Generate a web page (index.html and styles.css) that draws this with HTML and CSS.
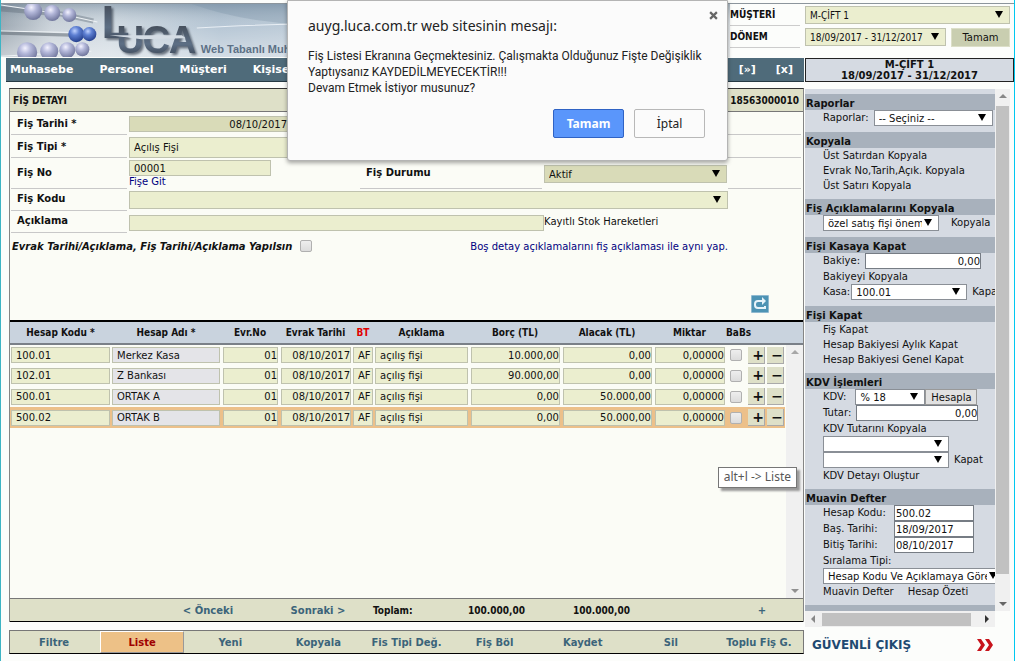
FILE: index.html
```html
<!DOCTYPE html>
<html lang="tr">
<head>
<meta charset="utf-8">
<title>Luca - Fiş Detayı</title>
<link rel="stylesheet" href="styles.css">
</head>
<body>
<header class="top">
  <svg class="banner" viewBox="0 0 726 53" preserveAspectRatio="xMinYMin slice" role="img" aria-label="Luca Web Tabanlı Muhasebe">
    <defs>
      <linearGradient id="sky" x1="0" x2="1" y1="0" y2="0">
        <stop offset="0" stop-color="#8d9aa6"/><stop offset=".07" stop-color="#c3ccd4"/><stop offset=".15" stop-color="#c8d3dc"/><stop offset=".3" stop-color="#a9bccd"/><stop offset="1" stop-color="#dfe4e8"/>
      </linearGradient>
      <linearGradient id="shade" x1="0" x2="0" y1="0" y2="1">
        <stop offset="0" stop-color="#5c7488" stop-opacity=".4"/><stop offset=".4" stop-color="#fff" stop-opacity=".15"/><stop offset="1" stop-color="#fff" stop-opacity=".5"/>
      </linearGradient>
      <linearGradient id="steel" x1="0" x2="0" y1="0" y2="1">
        <stop offset="0" stop-color="#3d434c"/><stop offset=".6" stop-color="#5d6f85"/><stop offset="1" stop-color="#333b48"/>
      </linearGradient>
      <radialGradient id="pearl" cx=".4" cy=".3" r=".7">
        <stop offset="0" stop-color="#f4f3ff"/><stop offset=".4" stop-color="#b4b8da"/><stop offset="1" stop-color="#70769c"/>
      </radialGradient>
      <radialGradient id="blue" cx=".4" cy=".3" r=".7">
        <stop offset="0" stop-color="#bfd2ff"/><stop offset=".4" stop-color="#5d7fd2"/><stop offset="1" stop-color="#26418f"/>
      </radialGradient>
    </defs>
    <rect width="726" height="53" fill="url(#sky)"/>
    <rect width="726" height="53" fill="url(#shade)"/>
    <path d="M190 0L300 0L300 20Q240 18 190 0Z" fill="#7f94a8" opacity=".35"/>
    <path d="M195 24Q240 21 300 20" stroke="#e8eef4" fill="none"/>
    <path d="M0 5L60 10L92 17" stroke="#606c78" stroke-width="5" fill="none" opacity=".4"/>
    <path d="M0 1L60 10L96 18M0 27L96 29M0 52L90 47" stroke="#eef2f5" fill="none"/>
    <path d="M0 29L70 31" stroke="#59636d" stroke-width="3" opacity=".5"/>
    <g fill="url(#pearl)"><circle cx="32" cy="7" r="9"/><circle cx="51" cy="9" r="8"/><circle cx="68" cy="11" r="7"/><circle cx="26" cy="48" r="10"/><circle cx="48" cy="47" r="9"/><circle cx="66" cy="46" r="8"/><circle cx="81" cy="45" r="7"/></g>
    <g fill="url(#blue)"><circle cx="75" cy="30" r="8"/><circle cx="88" cy="30" r="7"/></g>
    <g class="logo" fill="url(#steel)"><text x="100" y="34" font-size="46">L</text><text x="115 141 167" y="49" font-size="38">UCA</text></g>
    <path d="M108 31L180 31L184 34L140 35Z" fill="#d4dce4"/>
    <text class="slogan" x="199" y="49">Web Tabanlı Muhasebe</text>
  </svg>
  <form class="period">
    <label for="musteri">MÜŞTERİ</label>
    <span class="select green wide"><select id="musteri"><option>M-ÇİFT 1</option></select></span>
    <label for="donem">DÖNEM</label>
    <span class="select green"><select id="donem"><option>18/09/2017 - 31/12/2017</option></select></span>
    <button type="button" class="ok">Tamam</button>
  </form>
</header>

<div class="page">
  <main class="left">
    <nav class="menu">
      <a href="#">Muhasebe</a><a href="#">Personel</a><a href="#">Müşteri</a><a href="#">Kişisel</a>
      <a href="#" class="push">[»]</a><a href="#">[x]</a>
    </nav>
    <section class="panel">
      <h1 class="title"><span>FİŞ DETAYI</span><span>18563000010</span></h1>
      <form class="voucher">
        <label class="lbl low" for="tarih">Fiş Tarihi *</label>
        <input id="tarih" class="field dark date" value="08/10/2017">
        <span class="lbl end"></span>

        <label class="lbl low" for="tip">Fiş Tipi *</label>
        <input id="tip" class="field tall span3" value="Açılış Fişi">
        <span class="lbl end"></span>

        <label class="lbl number" for="no">Fiş No</label>
        <div class="no"><input id="no" class="field" value="00001"><a href="#">Fişe Git</a></div>
        <label class="lbl number" for="durum">Fiş Durumu</label>
        <span class="select green dark state"><select id="durum"><option>Aktif</option></select></span>
        <span class="lbl end"></span>

        <label class="lbl first" for="kod">Fiş Kodu</label>
        <span class="select green span3"><select id="kod"><option></option></select></span>

        <label class="lbl first" for="acik">Açıklama</label>
        <input id="acik" class="field span2">
        <a class="stock" href="#">Kayıtlı Stok Hareketleri</a>
      </form>
      <div class="apply">
        <label for="evrak">Evrak Tarihi/Açıklama, Fiş Tarihi/Açıklama Yapılsın</label>
        <input type="checkbox" id="evrak">
        <a href="#">Boş detay açıklamalarını fiş açıklaması ile aynı yap.</a>
      </div>
      <div class="tools">
        <button type="button" aria-label="Yenile"><svg viewBox="0 0 18 18"><rect width="18" height="18" rx="1" fill="#8fb9d0"/><rect x="1" y="1" width="16" height="16" fill="#4d93b4"/><path d="M13 6H7Q4 6 4 9V10Q4 13 7 13H14V11" fill="none" stroke="#e6f3fa" stroke-width="2"/><path d="M11 2L15 6L11 10Z" fill="#e6f3fa"/></svg></button>
      </div>
      <div class="lines">
        <table>
          <colgroup><col class="c-code"><col class="c-name"><col class="c-no"><col class="c-date"><col class="c-bt"><col><col class="c-sum"><col class="c-sum"><col class="c-qty"><col class="c-chk"><col class="c-btn"><col class="c-btn"><col class="c-bar"></colgroup>
          <thead><tr><th>Hesap Kodu *</th><th>Hesap Adı *</th><th>Evr.No</th><th>Evrak Tarihi</th><th class="red">BT</th><th>Açıklama</th><th>Borç (TL)</th><th>Alacak (TL)</th><th>Miktar</th><th class="babs" colspan="2">BaBs</th><th></th><th></th></tr></thead>
          <tbody>
            <tr><td><input aria-label="Hesap Kodu" value="100.01"></td><td><input class="name" aria-label="Hesap Adı" value="Merkez Kasa"></td><td class="num"><input aria-label="Evrak No" value="01"></td><td class="num"><input aria-label="Evrak Tarihi" value="08/10/2017"></td><td><input aria-label="BT" value="AF"></td><td><input aria-label="Açıklama" value="açılış fişi"></td><td class="num"><input aria-label="Borç" value="10.000,00"></td><td class="num"><input aria-label="Alacak" value="0,00"></td><td class="num"><input aria-label="Miktar" value="0,00000"></td><td class="chk"><input type="checkbox" aria-label="BaBs"></td><td><button type="button">+</button></td><td><button type="button">−</button></td><td></td></tr>
            <tr><td><input aria-label="Hesap Kodu" value="102.01"></td><td><input class="name" aria-label="Hesap Adı" value="Z Bankası"></td><td class="num"><input aria-label="Evrak No" value="01"></td><td class="num"><input aria-label="Evrak Tarihi" value="08/10/2017"></td><td><input aria-label="BT" value="AF"></td><td><input aria-label="Açıklama" value="açılış fişi"></td><td class="num"><input aria-label="Borç" value="90.000,00"></td><td class="num"><input aria-label="Alacak" value="0,00"></td><td class="num"><input aria-label="Miktar" value="0,00000"></td><td class="chk"><input type="checkbox" aria-label="BaBs"></td><td><button type="button">+</button></td><td><button type="button">−</button></td><td></td></tr>
            <tr><td><input aria-label="Hesap Kodu" value="500.01"></td><td><input class="name" aria-label="Hesap Adı" value="ORTAK A"></td><td class="num"><input aria-label="Evrak No" value="01"></td><td class="num"><input aria-label="Evrak Tarihi" value="08/10/2017"></td><td><input aria-label="BT" value="AF"></td><td><input aria-label="Açıklama" value="açılış fişi"></td><td class="num"><input aria-label="Borç" value="0,00"></td><td class="num"><input aria-label="Alacak" value="50.000,00"></td><td class="num"><input aria-label="Miktar" value="0,00000"></td><td class="chk"><input type="checkbox" aria-label="BaBs"></td><td><button type="button">+</button></td><td><button type="button">−</button></td><td></td></tr>
            <tr class="active"><td><input aria-label="Hesap Kodu" value="500.02"></td><td><input class="name" aria-label="Hesap Adı" value="ORTAK B"></td><td class="num"><input aria-label="Evrak No" value="01"></td><td class="num"><input aria-label="Evrak Tarihi" value="08/10/2017"></td><td><input aria-label="BT" value="AF"></td><td><input aria-label="Açıklama" value="açılış fişi"></td><td class="num"><input aria-label="Borç" value="0,00"></td><td class="num"><input aria-label="Alacak" value="50.000,00"></td><td class="num"><input aria-label="Miktar" value="0,00000"></td><td class="chk"><input type="checkbox" aria-label="BaBs"></td><td><button type="button">+</button></td><td><button type="button">−</button></td><td></td></tr>
          </tbody>
        </table>
        <div class="vbar idle"><i class="up"></i><i class="down"></i></div>
        <div class="tip">alt+l -&gt; Liste</div>
      </div>
      <div class="totals">
        <button type="button" class="prev">&lt; Önceki</button><button type="button">Sonraki &gt;</button>
        <b>Toplam:</b><b>100.000,00</b><b>100.000,00</b><button type="button" class="add">+</button>
      </div>
    </section>
    <div class="actions">
      <button type="button">Filtre</button><button type="button" class="on">Liste</button><button type="button">Yeni</button><button type="button">Kopyala</button><button type="button">Fis Tipi Değ.</button><button type="button">Fiş Böl</button><button type="button">Kaydet</button><button type="button">Sil</button><button type="button">Toplu Fiş G.</button>
    </div>
  </main>

  <aside class="right">
    <div class="firm">M-ÇİFT 1<br>18/09/2017 - 31/12/2017</div>
    <div class="scroller">
      <div class="side">
        <h2>Raporlar</h2>
        <div class="group"><div class="line"><label for="rap">Raporlar:</label><span class="select w118"><select id="rap"><option>-- Seçiniz --</option></select></span></div></div>
        <h2>Kopyala</h2>
        <div class="group"><a href="#">Üst Satırdan Kopyala</a><a href="#">Evrak No,Tarih,Açık. Kopyala</a><a href="#">Üst Satırı Kopyala</a></div>
        <h2>Fiş Açıklamalarını Kopyala</h2>
        <div class="group"><div class="line wide"><span class="select w116"><select aria-label="Açıklama"><option>özel satış fişi önemli</option></select></span><a href="#">Kopyala</a></div></div>
        <h2>Fişi Kasaya Kapat</h2>
        <div class="group"><div class="line"><label for="bak">Bakiye:</label><input id="bak" class="num w116" value="0,00"></div><a href="#">Bakiyeyi Kopyala</a><div class="line tight"><label for="kasa">Kasa:</label><span class="select w116"><select id="kasa"><option>100.01</option></select></span><a href="#">Kapat</a></div></div>
        <h2>Fişi Kapat</h2>
        <div class="group"><a href="#">Fiş Kapat</a><a href="#">Hesap Bakiyesi Aylık Kapat</a><a href="#">Hesap Bakiyesi Genel Kapat</a></div>
        <h2>KDV İşlemleri</h2>
        <div class="group"><div class="line kdv"><label for="kdv">KDV:</label><span class="select w70"><select id="kdv"><option>% 18</option></select></span><button type="button">Hesapla</button></div><div class="line"><label for="tut">Tutar:</label><input id="tut" class="num w122" value="0,00"></div><a href="#">KDV Tutarını Kopyala</a><div class="line"><span class="select w126"><select aria-label="KDV hesabı"><option></option></select></span></div><div class="line"><span class="select w126"><select aria-label="Karşı hesap"><option></option></select></span><a href="#">Kapat</a></div><a href="#">KDV Detayı Oluştur</a></div>
        <h2>Muavin Defter</h2>
        <div class="group ledger"><div class="line"><label for="hk">Hesap Kodu:</label><input id="hk" class="w80" value="500.02"></div><div class="line"><label for="bt">Baş. Tarihi:</label><input id="bt" class="w80" value="18/09/2017"></div><div class="line"><label for="bi">Bitiş Tarihi:</label><input id="bi" class="w80" value="08/10/2017"></div><label for="sira">Sıralama Tipi:</label><div class="line"><span class="select w176"><select id="sira"><option>Hesap Kodu Ve Açıklamaya Göre</option></select></span></div><div class="pair"><a href="#">Muavin Defter</a><a href="#">Hesap Özeti</a></div></div>
        <div class="rest"></div>
      </div>
      <div class="vbar"><i class="up"></i><b></b><i class="down"></i></div>
      <div class="hbar"><i class="back"></i><b></b><i class="fwd"></i></div>
    </div>
    <a class="exit" href="#">GÜVENLİ ÇIKIŞ <svg viewBox="0 0 16 12"><path d="M0 0H4L8 6L4 12H0L4 6ZM8 0H12L16 6L12 12H8L12 6Z" fill="#c8141c"/></svg></a>
  </aside>
</div>

<div class="overlay">
  <div class="dialog" role="dialog" aria-labelledby="dt">
    <button type="button" class="close" aria-label="Kapat"><svg viewBox="0 0 8 8"><path d="M1 1L7 7M7 1L1 7" stroke="#666" stroke-width="2"/></svg></button>
    <h2 id="dt">auyg.luca.com.tr web sitesinin mesajı:</h2>
    <p>Fiş Listesi Ekranına Geçmektesiniz. Çalışmakta Olduğunuz Fişte Değişiklik<br>Yaptıysanız KAYDEDİLMEYECEKTİR!!!<br>Devam Etmek İstiyor musunuz?</p>
    <div class="choices"><button type="button" class="primary">Tamam</button><button type="button">İptal</button></div>
  </div>
</div>
</body>
</html>
```
FILE: styles.css
```css
* { box-sizing: border-box; }
body { margin: 0; min-height: 100vh; display: flex; flex-direction: column; border-left: 1px solid #3db4c4; border-right: 1px solid #00c8f0; background: #fcfdfb; color: #111; font: 10px/15px Verdana, "DejaVu Sans", sans-serif; position: relative; }
a { color: inherit; text-decoration: none; }
input, select, button { font: inherit; color: inherit; margin: 0; border-radius: 0; }
input:not([type=checkbox]) { width: 100%; min-width: 0; height: 16px; border: 1px solid #bfc2ae; background: #ebeecf; padding: 0 0 0 4px; }
button { border: 0; padding: 0; background: none; }
input[type=checkbox] { appearance: none; width: 12px; height: 12px; border: 1px solid #b0b0b0; border-radius: 2px; background: linear-gradient(#eee, #dcdcdc); }
.select { position: relative; display: block; }
.select::after { content: ""; position: absolute; right: 7px; top: 50%; margin-top: -4px; border: solid transparent; border-width: 7px 4px 0; border-top-color: #000; pointer-events: none; }
.select select { appearance: none; display: block; width: 100%; height: 16px; border: 1px solid #8a8f96; background: #fff; padding: 0 16px 0 4px; }
.green select { height: 18px; border-color: #bfc2ae; background: #ebeecf; }
.dark select, .dark.field { background: #d9dbb8; }

.top { display: flex; margin-top: 3px; border-top: 1px solid #8c959c; height: 53px; }
.banner { flex: 1; min-width: 0; height: 53px; }
.logo { font-family: "Liberation Sans", Arial, sans-serif; font-weight: bold; filter: drop-shadow(2px 2px 1px rgba(30,40,55,.6)); }
.slogan { font: bold 11px "Liberation Sans", Arial, sans-serif; fill: #5d7186; }
.period { display: grid; grid-template-columns: 70px 141px 59px; column-gap: 5px; width: 284px; align-content: start; }
.period label { font-weight: bold; font-family: "DejaVu Sans Condensed", "DejaVu Sans", sans-serif; height: 22px; line-height: 22px; border-bottom: 1px solid #ccc; }
.period .wide { grid-column: 2 / 4; }
.period .select { font-family: "DejaVu Sans Condensed", "DejaVu Sans", sans-serif; padding-top: 2px; }
.period .ok { height: 19px; background: #c9ceb0; border: 1px solid #dcdfc8; margin-top: 2px; }

.page { flex: 1; display: flex; gap: 1px; }
.left { flex: 1; min-width: 0; display: flex; flex-direction: column; padding: 2px 0 8px 5px; }
.menu { display: flex; height: 24px; background: #4f6b7a; border-bottom: 1px solid #263a45; color: #fff; font-weight: bold; font-size: 11px; line-height: 23px; padding: 0 11px 0 4px; gap: 26px; }
.menu .push { margin-left: auto; }
.menu a:last-child { margin-left: -6px; }
.panel { flex: 1; display: flex; flex-direction: column; margin: 6px 0 8px 3px; border: solid #858585; border-width: 0 1px; border-top: 1px solid #333; background: #fbfcf6; }
.title { display: flex; justify-content: space-between; align-items: center; margin: 0; height: 23px; padding: 0 4px 0 3px; background: #dee0c8; border-bottom: 1px solid #777; font: bold 10px "DejaVu Sans Condensed", "DejaVu Sans", sans-serif; }
.voucher { display: grid; grid-template-columns: 118px 231px 184px 184px 1fr; padding: 0 2px 0 1px; align-items: start; }
.lbl { min-height: 22px; line-height: 20px; padding-left: 6px; margin-right: 2px; border-bottom: 1px solid #c8c8c8; font-weight: bold; align-self: stretch; }
.lbl.end { grid-column: 5; min-height: 23px; margin: 0; }
.lbl.low { line-height: 24px; height: 23px; }
.lbl.first { grid-column: 1; }
.lbl.number { line-height: 30px; }
.voucher > .field { margin-top: 4px; }
.voucher .tall { height: 21px; margin-top: 1px; }
.voucher .date { padding: 0 72px 0 0; text-align: right; }
.voucher .span3 { grid-column: 2 / 5; margin-top: 2px; }
.voucher .span2 { grid-column: 2 / 4; }
.voucher .stock { grid-column: 4 / 6; line-height: 22px; }
.no { padding: 2px 0 0; }
.no input:not([type=checkbox]) { width: 142px; display: block; }
.no a { display: block; line-height: 12px; color: #000080; }
.state { margin: 7px 1px 0 0; }
.apply { display: flex; align-items: center; height: 26px; padding: 0 75px 0 2px; }
.apply label { font-weight: bold; font-style: italic; }
.apply input { margin-left: 8px; }
.apply a { margin-left: auto; color: #000080; }
.tools { height: 61px; display: flex; justify-content: flex-end; align-items: flex-end; padding: 0 34px 7px 0; }
.tools button, .tools svg { display: block; width: 18px; height: 18px; }
.lines { flex: 1; position: relative; border-top: 2px solid #000; }
table { width: 100%; table-layout: fixed; border-collapse: collapse; }
.c-code { width: 101px; } .c-name { width: 110px; } .c-no { width: 58px; } .c-date { width: 73px; } .c-bt { width: 22px; } .c-sum { width: 92px; } .c-qty { width: 73px; } .c-chk { width: 21px; } .c-btn { width: 19px; } .c-bar { width: 18px; }
th { height: 22px; padding: 0; background: #c9d3de; border-bottom: 2px solid #7a8088; font: bold 10px "DejaVu Sans Condensed", "DejaVu Sans", sans-serif; white-space: nowrap; }
th.red { color: #e00000; }
th.babs { text-align: left; }
td { height: 21px; padding: 1px; }
td input, td button { display: block; }
td.num input:not([type=checkbox]) { text-align: right; padding: 0; }
td input:not([type=checkbox]).name { background: #e4e4e8; }
td.num { padding-left: 2px; }
td.chk input { margin: auto; }
td button { width: 100%; height: 17px; background: #dee0c8; border: solid #aaa; border-width: 0 1px 1px 0; font-weight: bold; font-size: 14px; line-height: 14px; text-align: right; }
.active td:not(:last-child) { background: #ecc08a; }
.vbar { background: #f0f0f0; display: flex; flex-direction: column; align-items: center; justify-content: space-between; padding: 5px 0; }
.vbar.idle { position: absolute; top: 23px; bottom: 0; right: 0; width: 17px; }
.up, .down, .back, .fwd { border: 4px solid transparent; }
.up { border-top: 0; border-bottom-color: #888; }
.down { border-bottom: 0; border-top-color: #666; }
.idle i { opacity: .7; }
.back { border-left: 0; border-right-color: #888; }
.fwd { border-right: 0; border-left-color: #333; }
.tip { position: absolute; right: 6px; top: 145px; height: 21px; padding: 0 5px; border: 1px solid #767676; background: #fff; box-shadow: 3px 3px 2px #999; color: #575757; font: 12px/18px "Noto Sans", sans-serif; white-space: nowrap; }
.totals { display: grid; grid-template-columns: 110px 110px 95px 105px 1fr 82px; padding-left: 143px; height: 24px; align-items: center; background: #dee0c8; border-top: 1px solid #777; border-bottom: 1px solid #000; }
.totals b { font-family: "DejaVu Sans Condensed", "DejaVu Sans", sans-serif; }
.totals button, .actions button { font-weight: bold; color: #3b647a; }
.actions { display: grid; grid-template-columns: repeat(9, 1fr); margin-left: 3px; height: 24px; background: #dee0c8; border: 1px solid #777; border-bottom-color: #000; }
.actions .on { background: #edc187; color: #a00000; border: solid; border-width: 1px; border-color: #fff #999 #999 #fff; margin: 0 2px; }

.right { width: 209px; display: flex; flex-direction: column; padding-top: 2px; }
.firm { height: 24px; border: 1px solid #222; background: #d5dae2; text-align: center; font-weight: bold; line-height: 11px; }
.scroller { margin: 7px 4px 0 0; display: grid; grid-template-columns: minmax(0, 1fr) 15px; grid-template-rows: 522px 16px; }
.side { overflow: hidden; background: #d5dae2; padding-top: 5px; }
.side h2 { margin: 0; height: 16px; padding-left: 1px; background: #a8b1bc; font: bold 10px/20px "DejaVu Sans", sans-serif; white-space: nowrap; }
.group { padding: 0 0 6px 18px; white-space: nowrap; }
.group > a, .group > label { display: block; }
.line { display: flex; gap: 5px; height: 16px; }
.line label, .line a { flex: none; }
.line.wide { gap: 12px; }
.line.tight { gap: 1px; }
.line.tight a { margin-left: 4px; }
.side input:not([type=checkbox]) { background: #fff; border-color: #767c84; padding-left: 1px; }
.side .num { text-align: right; }
.kdv { gap: 9px; }
.kdv button { width: 52px; margin-left: -9px; background: #e1e1e1; border: 1px solid #999; }
.side .w70, .side .w80, .side .w116, .side .w118, .side .w122, .side .w126, .side .w176 { flex: none; }
.side .w70 { width: 70px; }
.side input.w80:not([type=checkbox]) { width: 80px; }
.side .w116, .side input.w116:not([type=checkbox]) { width: 116px; }
.side .w118 { width: 119px; }
.side input.w122:not([type=checkbox]) { width: 122px; }
.side .w126 { width: 126px; }
.side .w176 { width: 176px; }
.side .w176::after { right: 2px; }
.side .w176 select { padding-right: 11px; }
.ledger .line label { width: 66px; }
.pair { display: flex; gap: 14px; }
.rest { height: 6px; background: #a8b1bc; }
.scroller .vbar b { flex: 1; width: 13px; margin: 8px 0 28px; background: #c1c1c1; }
.hbar { display: flex; align-items: center; background: #f0f0f0; padding: 0 6px; }
.hbar b { flex: 1; height: 13px; margin: 0 14px 0 7px; background: #c1c1c1; }
.exit { display: flex; justify-content: space-between; align-items: center; padding: 0 21px 0 7px; height: 35px; color: #1f4a72; font: bold 12px "DejaVu Sans", sans-serif; }
.exit svg { width: 16px; height: 12px; }

.overlay { position: absolute; inset: 0 0 auto; display: flex; justify-content: center; pointer-events: none; }
.dialog { position: relative; width: 441px; padding: 16px 22px 22px 20px; background: #fbfbfb; border: 1px solid #b4b4b4; border-radius: 0 0 3px 3px; box-shadow: 0 2px 4px rgba(0,0,0,.35); font: 12px/16px Roboto, sans-serif; color: #222; pointer-events: auto; }
.dialog h2 { margin: 0 0 13px; font: 14px/18px "Noto Sans", sans-serif; }
.dialog p { margin: 0 0 13px; white-space: nowrap; }
.choices { display: flex; justify-content: flex-end; gap: 10px; }
.choices button { width: 71px; height: 29px; border: 1px solid #b8b8b8; border-radius: 2px; font-family: "Noto Sans", sans-serif; }
.choices .primary { background: #5a96fb; border-color: #2f62c4; color: #fff; font-weight: bold; }
.close { position: absolute; right: 9px; top: 10px; }
.close svg { display: block; width: 9px; height: 9px; }
```
